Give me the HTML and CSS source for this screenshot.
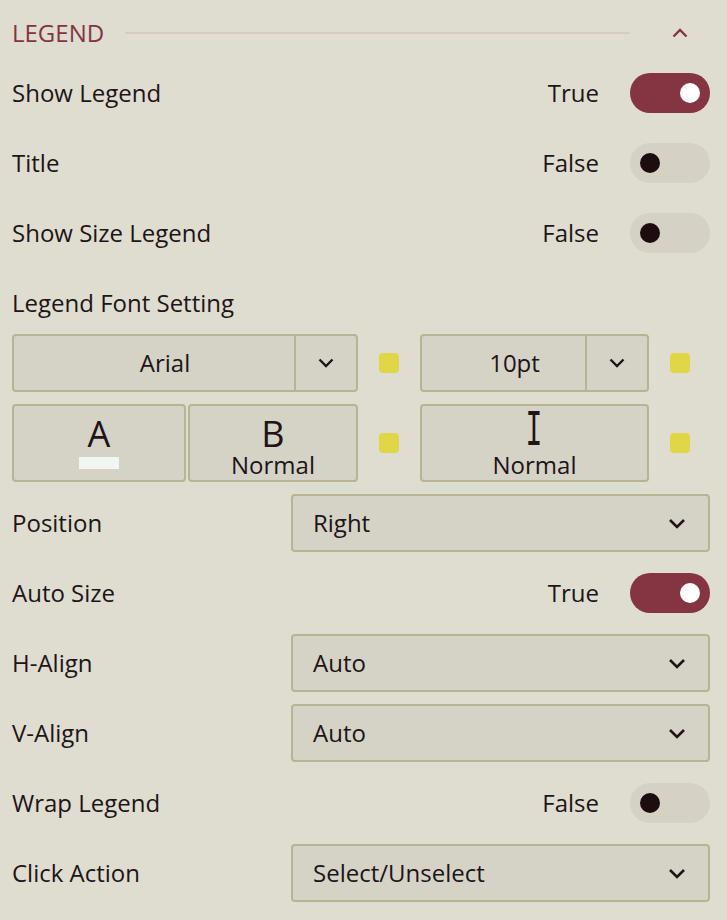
FILE: index.html
```html
<!DOCTYPE html>
<html>
<head>
<meta charset="utf-8">
<link rel="stylesheet" href="styles.css">
</head>
<body>
<div class="panel">
  <div class="header">
    <span class="header-title">LEGEND</span>
    <span class="header-line"></span>
    <span class="header-toggle">
      <svg width="16" height="10" viewBox="0 0 16 10"><path d="M1.5 8.5 L8 2 L14.5 8.5" fill="none" stroke="#843541" stroke-width="2.4"/></svg>
    </span>
  </div>

  <div class="row">
    <span class="label">Show Legend</span>
    <span class="switch-wrap"><span class="switch-text">True</span><span class="switch on"><span class="knob"></span></span></span>
  </div>
  <div class="row">
    <span class="label">Title</span>
    <span class="switch-wrap"><span class="switch-text">False</span><span class="switch off"><span class="knob"></span></span></span>
  </div>
  <div class="row">
    <span class="label">Show Size Legend</span>
    <span class="switch-wrap"><span class="switch-text">False</span><span class="switch off"><span class="knob"></span></span></span>
  </div>

  <div class="font-group">
    <div class="row">
      <span class="label">Legend Font Setting</span>
    </div>
    <div class="font-grid first">
      <div class="combo">
        <span class="combo-value">Arial</span>
        <span class="combo-btn"><svg width="16" height="10" viewBox="0 0 16 10"><path d="M1.5 1.5 L8 8 L14.5 1.5" fill="none" stroke="#201417" stroke-width="2.4"/></svg></span>
      </div>
      <span class="swatch"></span>
      <div class="combo">
        <span class="combo-value">10pt</span>
        <span class="combo-btn"><svg width="16" height="10" viewBox="0 0 16 10"><path d="M1.5 1.5 L8 8 L14.5 1.5" fill="none" stroke="#201417" stroke-width="2.4"/></svg></span>
      </div>
      <span class="swatch"></span>
    </div>
    <div class="font-grid second">
      <div class="pair">
        <div class="style-btn">
          <span class="glyph">A</span>
          <span class="color-bar"></span>
        </div>
        <div class="style-btn">
          <span class="glyph">B</span>
          <span class="style-name">Normal</span>
        </div>
      </div>
      <span class="swatch"></span>
      <div class="style-btn">
        <span class="glyph"><span class="italic-glyph">I</span></span>
        <span class="style-name">Normal</span>
      </div>
      <span class="swatch"></span>
    </div>
  </div>

  <div class="row">
    <span class="label">Position</span>
    <div class="select"><span>Right</span><svg width="18" height="11" viewBox="0 0 18 11"><path d="M2 2 L9 9 L16 2" fill="none" stroke="#201417" stroke-width="2.6"/></svg></div>
  </div>
  <div class="row">
    <span class="label">Auto Size</span>
    <span class="switch-wrap"><span class="switch-text">True</span><span class="switch on"><span class="knob"></span></span></span>
  </div>
  <div class="row">
    <span class="label">H-Align</span>
    <div class="select"><span>Auto</span><svg width="18" height="11" viewBox="0 0 18 11"><path d="M2 2 L9 9 L16 2" fill="none" stroke="#201417" stroke-width="2.6"/></svg></div>
  </div>
  <div class="row">
    <span class="label">V-Align</span>
    <div class="select"><span>Auto</span><svg width="18" height="11" viewBox="0 0 18 11"><path d="M2 2 L9 9 L16 2" fill="none" stroke="#201417" stroke-width="2.6"/></svg></div>
  </div>
  <div class="row">
    <span class="label">Wrap Legend</span>
    <span class="switch-wrap"><span class="switch-text">False</span><span class="switch off"><span class="knob"></span></span></span>
  </div>
  <div class="row">
    <span class="label">Click Action</span>
    <div class="select"><span>Select/Unselect</span><svg width="18" height="11" viewBox="0 0 18 11"><path d="M2 2 L9 9 L16 2" fill="none" stroke="#201417" stroke-width="2.6"/></svg></div>
  </div>
</div>
</body>
</html>
```
FILE: styles.css
```css
html, body {
  margin: 0;
  padding: 0;
  background: #dfddd0;
}
body {
  font-family: "Open Sans", "Noto Sans", sans-serif;
  font-size: 24px;
  color: #201417;
}
.panel {
  width: 698px;
  padding: 14px 17px 0 12px;
  display: flex;
  flex-direction: column;
  gap: 12px;
}
.header {
  height: 38px;
  display: flex;
  align-items: center;
}
.header-title {
  color: #843541;
  font-size: 24px;
  line-height: 1;
}
.header-line {
  flex: 1;
  height: 2px;
  background: #d6ccc0;
  margin: 0 42px 0 21px;
}
.header-toggle {
  display: flex;
  padding-right: 22px;
}
.row {
  height: 58px;
  display: flex;
  align-items: center;
  justify-content: space-between;
}
.label {
  line-height: 1;
}
.switch-wrap {
  display: flex;
  align-items: center;
  gap: 31px;
}
.switch-text {
  line-height: 1;
}
.switch {
  width: 80px;
  height: 40px;
  border-radius: 20px;
  display: flex;
  align-items: center;
  box-sizing: border-box;
  padding: 0 10px;
}
.switch.on {
  background: #843541;
  justify-content: flex-end;
}
.switch.off {
  background: #d5d2c5;
  justify-content: flex-start;
}
.knob {
  width: 20px;
  height: 20px;
  border-radius: 50%;
}
.switch.on .knob { background: #ffffff; }
.switch.off .knob { background: #1e0d10; }

.font-group {
  display: flex;
  flex-direction: column;
}
.font-grid {
  display: grid;
  grid-template-columns: 346px 20px 229px 20px;
  column-gap: 21px;
  align-items: center;
}
.font-grid.first {
  margin-top: 2px;
  height: 58px;
}
.font-grid.second {
  margin-top: 12px;
  height: 78px;
}
.combo {
  height: 100%;
  box-sizing: border-box;
  border: 2px solid #b8b393;
  border-radius: 4px;
  background: #d5d3c6;
  display: flex;
}
.combo-value {
  flex: 1;
  display: flex;
  align-items: center;
  justify-content: center;
  padding-left: 22px;
  line-height: 1;
}
.combo-btn {
  width: 60px;
  border-left: 2px solid #b8b393;
  display: flex;
  align-items: center;
  justify-content: center;
}
.swatch {
  width: 20px;
  height: 20px;
  border-radius: 4px;
  background: #e1d646;
}
.pair {
  height: 100%;
  display: grid;
  grid-template-columns: 174px 170px;
  column-gap: 2px;
}
.style-btn {
  height: 100%;
  box-sizing: border-box;
  border: 2px solid #b8b393;
  border-radius: 4px;
  background: #d5d3c6;
  display: flex;
  flex-direction: column;
  align-items: center;
  justify-content: flex-start;
  padding-top: 10px;
}
.glyph {
  font-size: 36px;
  font-weight: 400;
  line-height: 35px;
  height: 35px;
  display: flex;
  justify-content: center;
}
.italic-glyph {
  display: inline-block;
  font-family: "Liberation Mono", monospace;
  font-size: 40px;
  line-height: 35px;
  transform: scale(0.7, 1.3);
  transform-origin: 50% 70%;
}
.color-bar {
  width: 40px;
  height: 12px;
  background: #f2f6f2;
  margin-top: 6px;
}
.style-name {
  font-size: 24px;
  line-height: 24px;
  margin-top: 2px;
}
.select {
  width: 419px;
  height: 58px;
  box-sizing: border-box;
  border: 2px solid #b8b393;
  border-radius: 4px;
  background: #d5d3c6;
  display: flex;
  align-items: center;
  justify-content: space-between;
  padding: 0 22px 0 20px;
}
.select span {
  line-height: 1;
  margin-top: -1px;
}
```
